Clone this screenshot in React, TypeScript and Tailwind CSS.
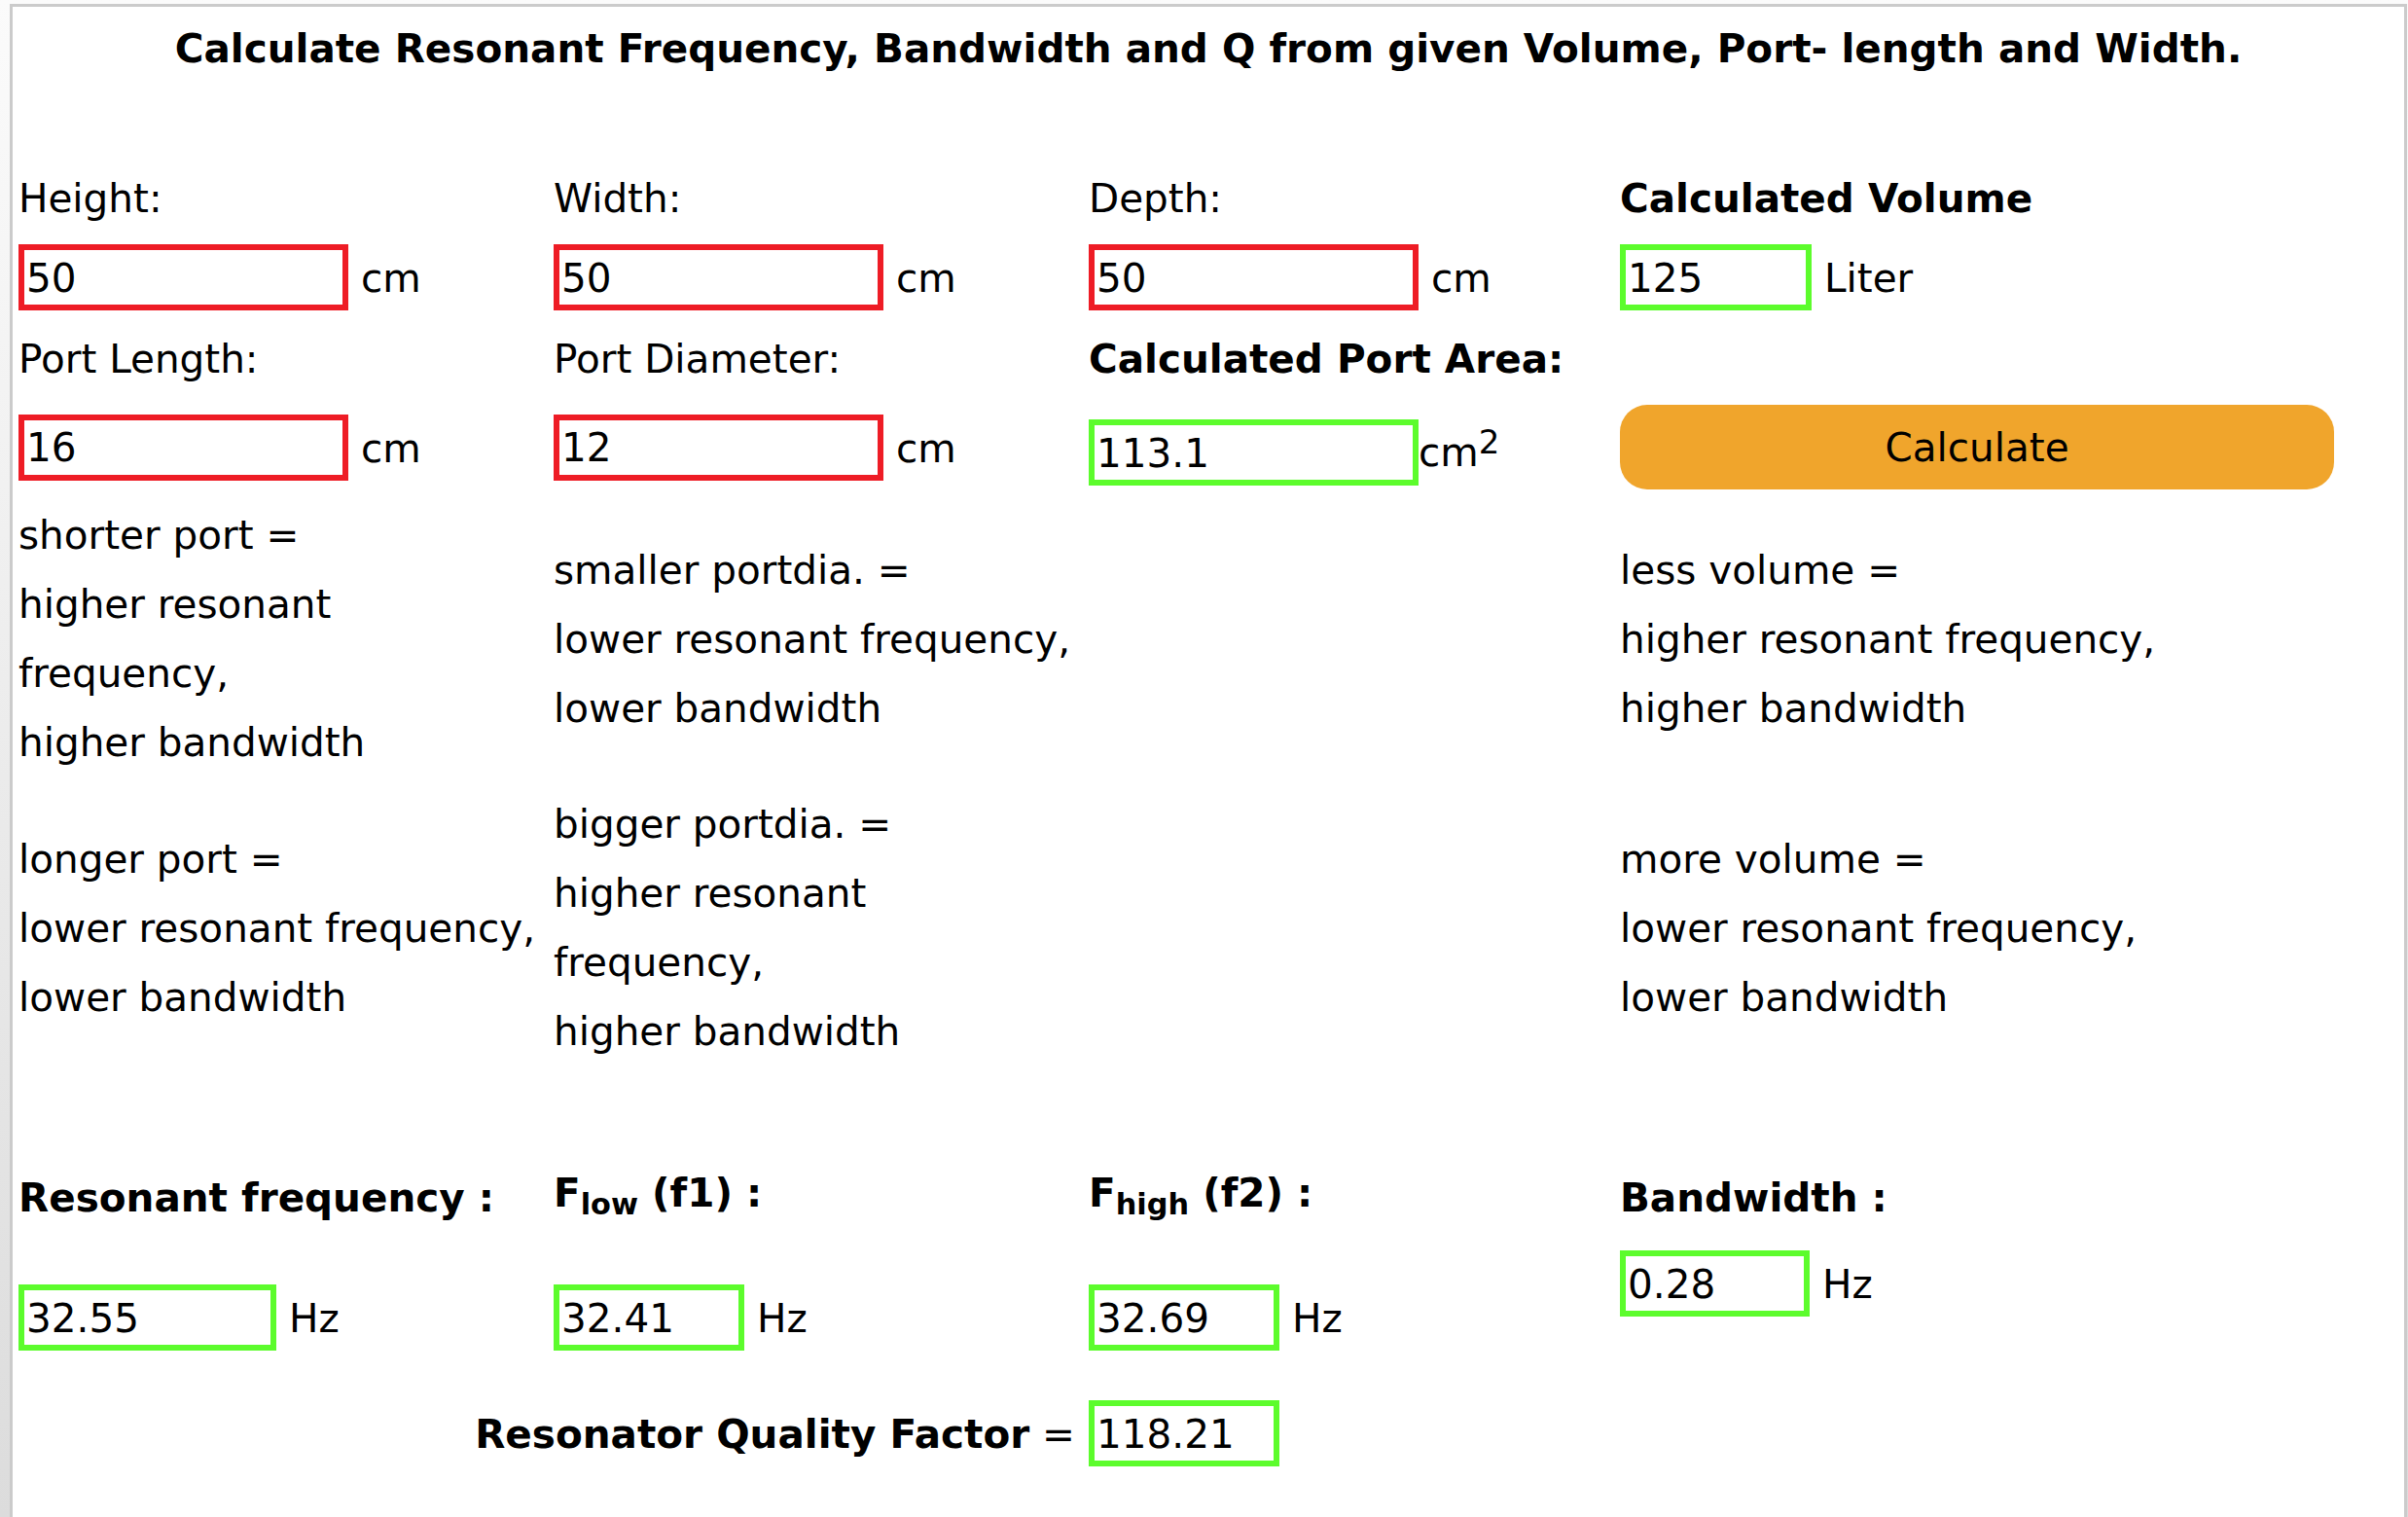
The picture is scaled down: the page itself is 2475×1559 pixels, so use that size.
import React from "react";

const RED = "border-[#ee1c25]";
const GREEN = "border-[#5cfc2c]";

function Field({ value, w, color }: { value: string; w: string; color: string }) {
  return (
    <input
      readOnly
      value={value}
      className={`h-[68px] ${w} border-[6px] ${color} bg-white px-[2px] pt-[1px] leading-[48px] text-black outline-none`}
    />
  );
}

function Lines({ lines }: { lines: string[] }) {
  return (
    <div className="leading-[71px]">
      {lines.map((l, i) => (
        <div key={i} className="whitespace-nowrap">{l}</div>
      ))}
    </div>
  );
}

export default function App() {
  return (
    <div className="h-[1559px] w-[2475px] overflow-hidden bg-gradient-to-b from-[#fbfbfb] to-[#dcdcdc] pt-[4px] pl-[10px] pr-[1px]">
      <div className="h-[1600px] border-[3px] border-b-0 border-[#cbcbcb] bg-white pl-[6px] pr-[6px] text-[40.5px] text-black font-['DejaVu_Sans','Verdana',sans-serif]">
        <h1 className="mt-[19px] text-center font-bold leading-[48px] whitespace-nowrap">
          Calculate Resonant Frequency, Bandwidth and Q from given Volume, Port- length and Width.
        </h1>

        {/* Row A: labels */}
        <div className="mt-[106px] grid h-[48px] grid-cols-[550px_550px_546px_734px] leading-[48px]">
          <div>Height:</div>
          <div>Width:</div>
          <div>Depth:</div>
          <div className="font-bold">Calculated Volume</div>
        </div>

        {/* Row B: inputs */}
        <div className="mt-[23px] grid h-[68px] grid-cols-[550px_550px_546px_734px] leading-[48px]">
          <div className="flex items-center gap-[13px]">
            <Field value="50" w="w-[339px]" color={RED} />
            <span className="pt-[2px]">cm</span>
          </div>
          <div className="flex items-center gap-[13px]">
            <Field value="50" w="w-[339px]" color={RED} />
            <span className="pt-[2px]">cm</span>
          </div>
          <div className="flex items-center gap-[13px]">
            <Field value="50" w="w-[339px]" color={RED} />
            <span className="pt-[2px]">cm</span>
          </div>
          <div className="flex items-center gap-[13px]">
            <Field value="125" w="w-[197px]" color={GREEN} />
            <span className="pt-[2px]">Liter</span>
          </div>
        </div>

        {/* Row C: labels */}
        <div className="mt-[26px] grid h-[48px] grid-cols-[550px_550px_546px_734px] leading-[48px]">
          <div>Port Length:</div>
          <div>Port Diameter:</div>
          <div className="font-bold">Calculated Port Area:</div>
          <div></div>
        </div>

        {/* Row D: inputs + button */}
        <div className="mt-[23px] grid h-[87px] grid-cols-[550px_550px_546px_734px] leading-[48px]">
          <div className="flex items-center gap-[13px]">
            <Field value="16" w="w-[339px]" color={RED} />
            <span className="pt-[2px]">cm</span>
          </div>
          <div className="flex items-center gap-[13px]">
            <Field value="12" w="w-[339px]" color={RED} />
            <span className="pt-[2px]">cm</span>
          </div>
          <div className="flex items-start pt-[15px]">
            <Field value="113.1" w="w-[339px]" color={GREEN} />
            <span className="mt-[10px]">
              cm<sup className="text-[34px] top-[-13px]">2</sup>
            </span>
          </div>
          <div>
            <button className="h-[87px] w-[734px] rounded-[28px] bg-[#f0a52c] pt-[2px] text-[40.5px] leading-none text-black">
              Calculate
            </button>
          </div>
        </div>

        {/* Row E */}
        <div className="mt-[12px] grid h-[284px] grid-cols-[550px_550px_546px_734px] items-center">
          <Lines lines={["shorter port =", "higher resonant", "frequency,", "higher bandwidth"]} />
          <Lines lines={["smaller portdia. =", "lower resonant frequency,", "lower bandwidth"]} />
          <div></div>
          <Lines lines={["less volume =", "higher resonant frequency,", "higher bandwidth"]} />
        </div>

        {/* Row F */}
        <div className="mt-[13px] grid h-[284px] grid-cols-[550px_550px_546px_734px] items-center">
          <Lines lines={["longer port =", "lower resonant frequency,", "lower bandwidth"]} />
          <Lines lines={["bigger portdia. =", "higher resonant", "frequency,", "higher bandwidth"]} />
          <div></div>
          <Lines lines={["more volume =", "lower resonant frequency,", "lower bandwidth"]} />
        </div>

        {/* Row G: result labels */}
        <div className="mt-[106px] grid h-[53px] grid-cols-[550px_550px_546px_734px] items-start font-bold leading-[48px]">
          <div className="pt-[5px] whitespace-nowrap">Resonant frequency :</div>
          <div className="whitespace-nowrap">
            F<sub>low</sub> (f1) :
          </div>
          <div className="whitespace-nowrap">
            F<sub>high</sub> (f2) :
          </div>
          <div className="pt-[5px] whitespace-nowrap">Bandwidth :</div>
        </div>

        {/* Row H: result fields */}
        <div className="mt-[30px] grid h-[103px] grid-cols-[550px_550px_546px_734px] leading-[48px]">
          <div className="flex items-center gap-[13px] self-end">
            <Field value="32.55" w="w-[265px]" color={GREEN} />
            <span className="pt-[2px]">Hz</span>
          </div>
          <div className="flex items-center gap-[13px] self-end">
            <Field value="32.41" w="w-[196px]" color={GREEN} />
            <span className="pt-[2px]">Hz</span>
          </div>
          <div className="flex items-center gap-[13px] self-end">
            <Field value="32.69" w="w-[196px]" color={GREEN} />
            <span className="pt-[2px]">Hz</span>
          </div>
          <div className="flex items-center gap-[13px] self-start">
            <Field value="0.28" w="w-[195px]" color={GREEN} />
            <span className="pt-[2px]">Hz</span>
          </div>
        </div>

        {/* Row I: quality factor */}
        <div className="mt-[51px] grid h-[68px] grid-cols-[1100px_546px] leading-[48px]">
          <div className="flex items-center justify-end pr-[14px] pt-[2px] whitespace-nowrap">
            <span className="font-bold">Resonator Quality Factor</span>
            <span>&nbsp;=</span>
          </div>
          <div className="flex items-center">
            <Field value="118.21" w="w-[196px]" color={GREEN} />
          </div>
        </div>
      </div>
    </div>
  );
}
